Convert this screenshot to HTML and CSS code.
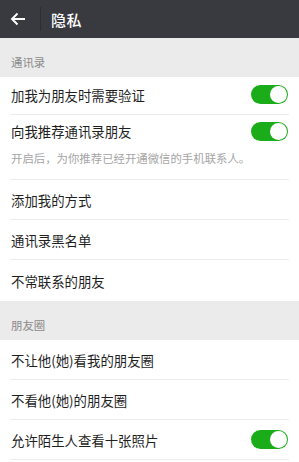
FILE: index.html
```html
<!DOCTYPE html>
<html lang="zh">
<head>
<meta charset="utf-8">
<link rel="stylesheet" href="styles.css">
</head>
<body>
<div class="app">
  <header class="topbar">
    <span class="back">
      <svg width="16" height="14" viewBox="0 0 16 14"><path d="M15 7H2M7.5 1.5L2 7l5.5 5.5" fill="none" stroke="#fff" stroke-width="1.9"/></svg>
    </span>
    <span class="sep"></span>
    <span class="title">隐私</span>
  </header>

  <div class="section-label">通讯录</div>
  <div class="group">
    <div class="row first"><span class="text">加我为朋友时需要验证</span><span class="switch"></span></div>
    <div class="row tall">
      <div class="row-main"><span class="text">向我推荐通讯录朋友</span><span class="switch"></span></div>
      <div class="sub">开启后，为你推荐已经开通微信的手机联系人。</div>
    </div>
    <div class="row"><span class="text">添加我的方式</span></div>
    <div class="row"><span class="text">通讯录黑名单</span></div>
    <div class="row last"><span class="text">不常联系的朋友</span></div>
  </div>

  <div class="section-label">朋友圈</div>
  <div class="group">
    <div class="row"><span class="text">不让他(她)看我的朋友圈</span></div>
    <div class="row"><span class="text">不看他(她)的朋友圈</span></div>
    <div class="row"><span class="text">允许陌生人查看十张照片</span><span class="switch"></span></div>
  </div>
</div>
</body>
</html>
```
FILE: styles.css
```css
* { box-sizing: border-box; }
html, body { margin: 0; padding: 0; }
body {
  width: 299px;
  height: 462px;
  overflow: hidden;
  background: #fff;
  font-family: "Noto Sans CJK SC", "Noto Sans", sans-serif;
  color: #1f1f1f;
}
.topbar {
  height: 38px;
  background: #393a3f;
  display: flex;
  align-items: center;
}
.back {
  width: 40px;
  display: flex;
  justify-content: center;
  padding-right: 4px;
}
.back svg { display: block; }
.sep {
  width: 1px;
  height: 24px;
  background: #2d2e32;
}
.title {
  color: #fff;
  font-size: 15px;
  font-weight: 500;
  margin-left: 10px;
  letter-spacing: 0.5px;
}
.section-label {
  background: #ebebeb;
  height: 39px;
  padding: 16px 11px 0;
  font-size: 11.4px;
  color: #8a8a8a;
  line-height: 16px;
}
.group { background: #fff; }
.row {
  height: 40px;
  margin: 0 10px;
  padding: 0 1px;
  display: flex;
  align-items: center;
  justify-content: space-between;
  border-bottom: 1px solid #ececec;
}
.row.first { height: 38px; padding-bottom: 2px; }
.row.last { border-bottom: none; height: 41px; }
.row.tall {
  height: 65px;
  display: block;
  padding-top: 5px;
}
.row-main {
  display: flex;
  align-items: center;
  justify-content: space-between;
  height: 22px;
}
.sub {
  font-size: 11.4px;
  color: #a5a5a5;
  margin-top: 8px;
  line-height: 16px;
}
.text {
  font-size: 13.4px;
  line-height: 18px;
}
.switch {
  width: 37px;
  height: 19px;
  border-radius: 10px;
  background: #1aad19;
  position: relative;
}
.switch::after {
  content: "";
  position: absolute;
  right: 1px;
  top: 1px;
  width: 17px;
  height: 17px;
  border-radius: 50%;
  background: #fff;
}
```
